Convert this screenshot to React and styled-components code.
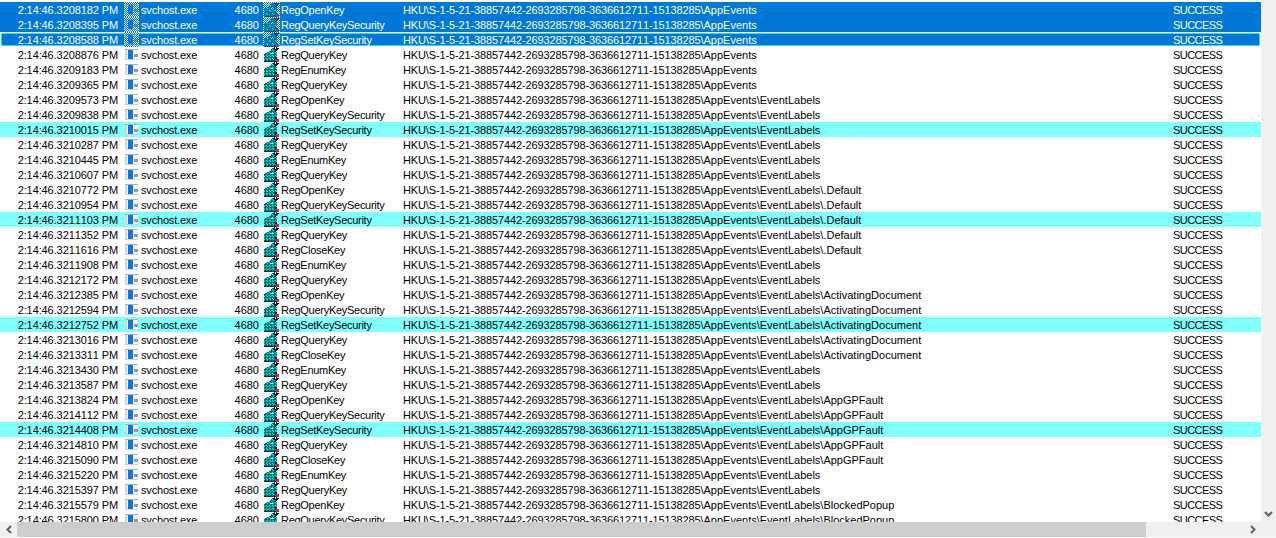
import React from "react";
import styled, { createGlobalStyle } from "styled-components";

const ROOT = "HKU\\S-1-5-21-38857442-2693285798-3636612711-15138285";
const EVENTS = "\\AppEvents";
const LABELS = EVENTS + "\\EventLabels";
const DEFAULT = LABELS + "\\.Default";
const ACTIVATING = LABELS + "\\ActivatingDocument";
const FAULT = LABELS + "\\AppGPFault";
const POPUP = LABELS + "\\BlockedPopup";

const OPEN = "RegOpenKey";
const SECURITY = "RegQueryKeySecurity";
const SET = "RegSetKeySecurity";
const QUERY = "RegQueryKey";
const ENUM = "RegEnumKey";
const CLOSE = "RegCloseKey";

const events = [
  ["3208182", OPEN, EVENTS, "selected"],
  ["3208395", SECURITY, EVENTS, "selected"],
  ["3208588", SET, EVENTS, "focused"],
  ["3208876", QUERY, EVENTS],
  ["3209183", ENUM, EVENTS],
  ["3209365", QUERY, EVENTS],
  ["3209573", OPEN, LABELS],
  ["3209838", SECURITY, LABELS],
  ["3210015", SET, LABELS, "marked"],
  ["3210287", QUERY, LABELS],
  ["3210445", ENUM, LABELS],
  ["3210607", QUERY, LABELS],
  ["3210772", OPEN, DEFAULT],
  ["3210954", SECURITY, DEFAULT],
  ["3211103", SET, DEFAULT, "marked"],
  ["3211352", QUERY, DEFAULT],
  ["3211616", CLOSE, DEFAULT],
  ["3211908", ENUM, LABELS],
  ["3212172", QUERY, LABELS],
  ["3212385", OPEN, ACTIVATING],
  ["3212594", SECURITY, ACTIVATING],
  ["3212752", SET, ACTIVATING, "marked"],
  ["3213016", QUERY, ACTIVATING],
  ["3213311", CLOSE, ACTIVATING],
  ["3213430", ENUM, LABELS],
  ["3213587", QUERY, LABELS],
  ["3213824", OPEN, FAULT],
  ["3214112", SECURITY, FAULT],
  ["3214408", SET, FAULT, "marked"],
  ["3214810", QUERY, FAULT],
  ["3215090", CLOSE, FAULT],
  ["3215220", ENUM, LABELS],
  ["3215397", QUERY, LABELS],
  ["3215579", OPEN, POPUP],
  ["3215800", SECURITY, POPUP],
];

const isActive = (state) => state === "selected" || state === "focused";

function ProcessIcon() {
  return (
    <svg width="15" height="13" viewBox="0 0 15 13" shapeRendering="crispEdges">
      <rect x="1" y="1" width="13" height="11" fill="#f4f4f4" />
      <rect x="1" y="1" width="13" height="1" fill="#b0b0b0" />
      <rect x="1" y="2" width="2" height="9" fill="#d8d8d8" />
      <rect x="4" y="2" width="5" height="9" fill="#0a78e0" />
      <rect x="10" y="6" width="4" height="3" fill="#9a9a9a" />
      <rect x="1" y="11" width="13" height="1" fill="#d0d0d0" />
    </svg>
  );
}

function RegistryIcon({ id }) {
  return (
    <svg width="17" height="17" viewBox="0 0 17 17" shapeRendering="crispEdges">
      <defs>
        <pattern id={id} width="3" height="3" patternUnits="userSpaceOnUse">
          <rect width="3" height="3" fill="#008484" />
          <rect width="1" height="1" fill="#20e4e4" />
          <rect x="1" y="1" width="1" height="1" fill="#20e4e4" />
          <rect x="2" y="2" width="1" height="1" fill="#0a3c3c" />
        </pattern>
      </defs>
      <polygon points="1,8 4,6 7,5 9,2 13,3 14,8 14,12 13,15 1,15" fill={`url(#${id})`} />
      <path d="M1 15h12v1H1z" fill="#063030" />
      <path d="M10 2h1V1h1v1h1V1h2v1h1v1h-1v1h-1v1h-1v1h-1V4h-1V3h-1z" fill="#101818" />
      <path d="M12 2h1v1h-1zM14 1h1v1h-1zM8 7h2v1H8z" fill="#c8ffff" />
      <path d="M12 11h2v2h-2z" fill="#1a1a1a" />
      <path d="M13 13h3v3h-3z" fill="#e8105a" />
    </svg>
  );
}

export default function App() {
  return (
    <>
      <GlobalStyle />
      <Window>
        <Body>
          <List>
            {events.map(([tick, operation, path, state]) => (
              <Row key={tick} $state={state}>
                <Time>2:14:46.{tick} PM</Time>
                <Process>
                  <IconSlot $state={state}>
                    <ProcessIcon />
                  </IconSlot>
                  <ProcessName>svchost.exe</ProcessName>
                </Process>
                <Pid>4680</Pid>
                <Operation>
                  <IconSlot $state={state}>
                    <RegistryIcon id={`dither-${tick}`} />
                  </IconSlot>
                  <OperationName>{operation}</OperationName>
                </Operation>
                <Path>
                  <Hive>{ROOT}</Hive>
                  {path}
                </Path>
                <Result>SUCCESS</Result>
              </Row>
            ))}
          </List>
          <VerticalBar>
            <ArrowDown viewBox="0 0 9 6">
              <path d="M1 1l3.5 3.5L8 1" />
            </ArrowDown>
          </VerticalBar>
        </Body>
        <HorizontalBar>
          <ArrowSlot>
            <ArrowSide viewBox="0 0 6 9">
              <path d="M5 1L1.5 4.5 5 8" />
            </ArrowSide>
          </ArrowSlot>
          <Thumb />
          <ArrowSlot>
            <ArrowSide viewBox="0 0 6 9">
              <path d="M1 1l3.5 3.5L1 8" />
            </ArrowSide>
          </ArrowSlot>
        </HorizontalBar>
      </Window>
    </>
  );
}

const GlobalStyle = createGlobalStyle`
  html, body {
    margin: 0;
    background: #ffffff;
  }
`;

const Window = styled.div`
  width: 1276px;
  height: 538px;
  overflow: hidden;
  display: flex;
  flex-direction: column;
  font-family: "Liberation Sans", Arial, sans-serif;
  font-size: 11px;
  font-kerning: none;
  color: #000000;
`;

const Body = styled.div`
  height: 522px;
  display: flex;
`;

const List = styled.div`
  width: 1261px;
  height: 522px;
  padding-top: 2px;
  box-sizing: border-box;
  overflow: hidden;
`;

const Row = styled.div`
  height: 15px;
  display: grid;
  grid-template-columns: 122px 96px 41px 139px 771px 1fr;
  align-items: center;
  white-space: nowrap;
  background: ${(p) => (isActive(p.$state) ? "#0078d7" : p.$state === "marked" ? "#80ffff" : "#ffffff")};
  color: ${(p) => (isActive(p.$state) ? "#ffffff" : "#000000")};
  box-shadow: ${(p) => (p.$state === "focused" ? "inset 0 0 0 1px #ffffff, inset 0 0 0 2px #40d0ff" : "none")};
`;

const Time = styled.span`
  text-align: right;
  padding-right: 4px;
  letter-spacing: -0.1px;
`;

const Process = styled.span`
  display: flex;
  align-items: center;
  gap: 2px;
  padding-left: 2px;
`;

const ProcessName = styled.span`
  letter-spacing: -0.18px;
`;

const Pid = styled.span`
  text-align: right;
`;

const Operation = styled.span`
  display: flex;
  align-items: center;
  gap: 1px;
  padding-left: 4px;
`;

const OperationName = styled.span`
  letter-spacing: -0.28px;
`;

const IconSlot = styled.span`
  display: flex;
  height: 15px;
  align-items: center;
  position: relative;
  ${(p) =>
    isActive(p.$state)
      ? `
    background: #ffffff;
    &::after {
      content: "";
      position: absolute;
      inset: 0;
      background: repeating-conic-gradient(#0078d7 0 25%, transparent 0 50%) 0 0 / 2px 2px;
    }
  `
      : ""}
`;

const Path = styled.span`
  padding-left: 5px;
`;

const Hive = styled.span`
  letter-spacing: -0.125px;
`;

const Result = styled.span`
  padding-left: 4px;
  letter-spacing: -0.55px;
`;

const VerticalBar = styled.div`
  width: 15px;
  background: #f0f0f0;
  display: flex;
  align-items: flex-end;
  justify-content: center;
  padding-bottom: 5px;
  box-sizing: border-box;
`;

const HorizontalBar = styled.div`
  height: 15px;
  display: flex;
  background: #f0f0f0;
`;

const ArrowSlot = styled.div`
  width: 17px;
  display: flex;
  align-items: center;
  justify-content: center;
`;

const Thumb = styled.div`
  width: 1129px;
  background: #cdcdcd;
  margin-right: 98px;
`;

const ArrowDown = styled.svg`
  width: 9px;
  height: 6px;
  fill: none;
  stroke: #606060;
  stroke-width: 2;
`;

const ArrowSide = styled.svg`
  width: 6px;
  height: 9px;
  fill: none;
  stroke: #606060;
  stroke-width: 2;
`;
